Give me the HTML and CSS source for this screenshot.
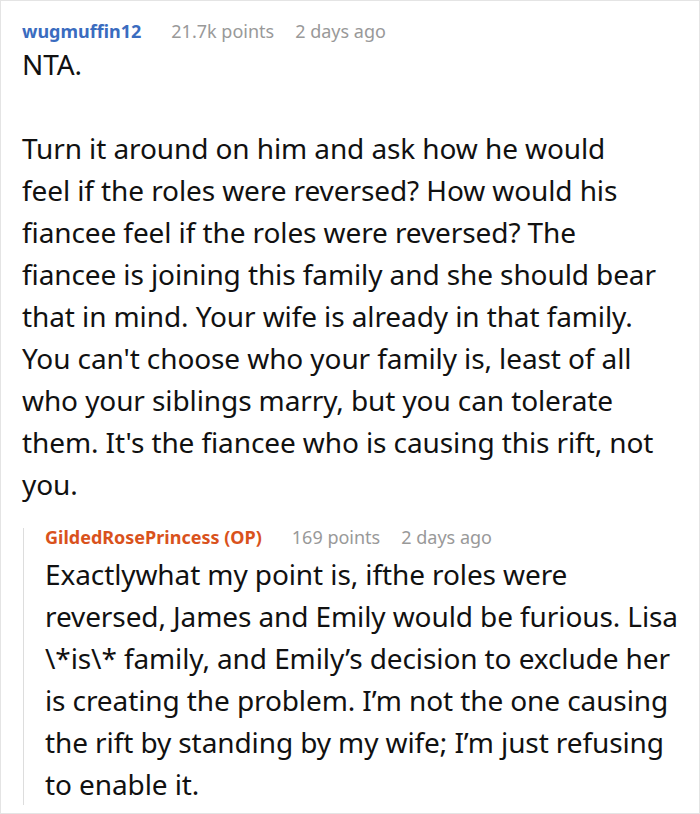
FILE: index.html
```html
<!DOCTYPE html>
<html>
<head>
<meta charset="utf-8">
<link rel="stylesheet" href="styles.css">
</head>
<body>
<div class="comment">
  <div class="meta">
    <span class="author">wugmuffin12</span>
    <span class="info points">21.7k points</span>
    <span class="info">2 days ago</span>
  </div>
  <div class="body">
    <p>NTA.</p>
    <p>Turn it around on him and ask how he would<br>
    feel if the roles were reversed? How would his<br>
    fiancee feel if the roles were reversed? The<br>
    fiancee is joining this family and she should bear<br>
    that in mind. Your wife is already in that family.<br>
    You can't choose who your family is, least of all<br>
    who your siblings marry, but you can tolerate<br>
    them. It's the fiancee who is causing this rift, not<br>
    you.</p>
  </div>
  <div class="reply">
    <div class="meta">
      <span class="author op">GildedRosePrincess (OP)</span>
      <span class="info points">169 points</span>
      <span class="info">2 days ago</span>
    </div>
    <div class="body">
      <p>Exactlywhat my point is, ifthe roles were<br>
      reversed, James and Emily would be furious. Lisa<br>
      \*is\* family, and Emily’s decision to exclude her<br>
      is creating the problem. I’m not the one causing<br>
      the rift by standing by my wife; I’m just refusing<br>
      to enable it.</p>
    </div>
  </div>
</div>
</body>
</html>
```

FILE: styles.css
```css
html, body {
  margin: 0;
  padding: 0;
  background: #fff;
}

.comment {
  box-sizing: border-box;
  width: 700px;
  height: 814px;
  border: 1px solid #e4e4e4;
  padding: 18px 2px 0 21px;
  font-family: "Noto Sans", "Open Sans", sans-serif;
  color: #111;
  overflow: hidden;
}

.meta {
  display: flex;
  align-items: baseline;
  font-size: 18px;
  line-height: 24px;
}

.author {
  font-weight: 700;
  color: #3a6cbf;
}

.author.op {
  color: #d9521c;
}

.info {
  color: #999;
  margin-left: 21px;
}

.info.points {
  margin-left: 30px;
}

.body {
  font-size: 28px;
  line-height: 42px;
  letter-spacing: -0.1px;
}

.body p {
  margin: 0 0 42px 0;
}

.body p:last-child {
  margin-bottom: 0;
}

.reply {
  margin-top: 23px;
  margin-left: 1px;
  border-left: 1px solid #ddd;
  padding-left: 21px;
}

.reply .meta {
  line-height: 18px;
  margin-bottom: 7px;
}

.reply .body p:last-child {
  margin-bottom: -10px;
}
```
